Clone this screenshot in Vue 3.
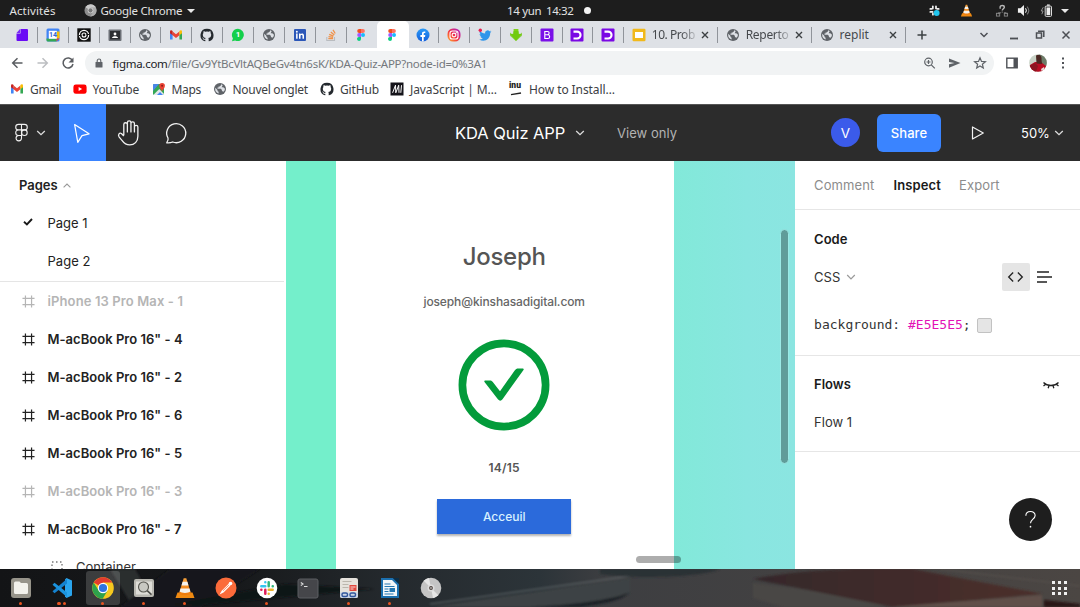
<script setup>
const pinned = [
  'doc', 'calendar', 'ring', 'classroom', 'globe', 'gmail', 'github', 'whatsapp', 'globe', 'linkedin',
  'stack', 'figma', 'figma', 'facebook', 'instagram', 'twitter', 'download', 'bootstrap', 'dee', 'dee'
]
const pinText = { calendar: '14', whatsapp: '1' }
const activeTab = 12
const tabs = [
  { icon: 'slides', text: '10. Prob', cls: 'w-prob' },
  { icon: 'globe', text: 'Reperto', cls: 'w-rep' },
  { icon: 'globe', text: 'replit', cls: 'w-replit' }
]
const bookmarks = [
  { icon: 'gmail', text: 'Gmail', cls: 'b1' },
  { icon: 'youtube', text: 'YouTube', cls: 'b2' },
  { icon: 'maps', text: 'Maps', cls: 'b3' },
  { icon: 'globe', text: 'Nouvel onglet', cls: 'b4' },
  { icon: 'github', text: 'GitHub', cls: 'b5' },
  { icon: 'mdn', text: 'JavaScript | M…', cls: 'b6' },
  { icon: 'inu', text: 'How to Install…', cls: 'b7' }
]
const layers = [
  { text: 'iPhone 13 Pro Max - 1', dim: true, wide: true },
  { text: 'M-acBook Pro 16" - 4' },
  { text: 'M-acBook Pro 16" - 2' },
  { text: 'M-acBook Pro 16" - 6' },
  { text: 'M-acBook Pro 16" - 5' },
  { text: 'M-acBook Pro 16" - 3', dim: true },
  { text: 'M-acBook Pro 16" - 7' }
]
const dock = [
  { icon: 'd-files', dots: 1 }, { icon: 'd-code', dots: 2 }, { icon: 'd-chrome', dots: 1, on: true },
  { icon: 'd-search', dots: 1 }, { icon: 'd-vlc', dots: 1 }, { icon: 'd-postman', dots: 0 },
  { icon: 'd-slack', dots: 1 }, { icon: 'd-term', dots: 0 }, { icon: 'd-doc', dots: 1 },
  { icon: 'd-writer', dots: 1 }, { icon: 'd-disc', dots: 0 }
]
</script>

<template>
  <div class="screen">
    <svg class="defs" width="0" height="0">
      <defs>
        <linearGradient id="ig" x1="0" y1="1" x2="1" y2="0">
          <stop offset="0" stop-color="#ffb82e" /><stop offset=".45" stop-color="#f5333f" /><stop offset="1" stop-color="#a51bd6" />
        </linearGradient>
        <linearGradient id="fb" x1="0" y1="0" x2="0" y2="1">
          <stop offset="0" stop-color="#2a9af7" /><stop offset="1" stop-color="#1560dc" />
        </linearGradient>
        <linearGradient id="cone" x1="0" y1="0" x2="0" y2="1">
          <stop offset="0" stop-color="#f9a23a" /><stop offset="1" stop-color="#ee7a0c" />
        </linearGradient>
      </defs>
      <symbol id="doc" viewBox="0 0 14 14"><path d="M5.500 1H12a1 1 0 0 1 1 1v10a1 1 0 0 1-1 1H2.500a1 1 0 0 1-1-1V5.500H5.500z" fill="#6a0cf5" /><path d="M5 1v4H1.500z" fill="#7a2cf7" /></symbol>
      <symbol id="calendar" viewBox="0 0 14 14"><rect x=".5" y=".5" width="13" height="13" rx="1.500" fill="#4285f4" /><path d="M10.500 3.500h3v7h-3z" fill="#fbbc04" /><path d="M3 10.500h7.500v3H2a1.500 1.500 0 0 1-1.500-1.500v-1.500z" fill="#34a853" /><path d="M10.500 10.500h3l-3 3z" fill="#ea4335" /><rect x="2.800" y="2.800" width="8" height="8" fill="#fff" /></symbol>
      <symbol id="ring" viewBox="0 0 14 14"><rect x=".3" y=".3" width="13.400" height="13.400" fill="#111" /><circle cx="7" cy="7" r="4.600" fill="none" stroke="#fff" stroke-width="1.200" /><circle cx="7" cy="7" r="2" fill="none" stroke="#fff" stroke-width="1.100" /><path d="M2 7.500h2.500M9.500 6.500H12" stroke="#111" /></symbol>
      <symbol id="classroom" viewBox="0 0 14 14"><rect x=".5" y="1.500" width="13" height="11.500" rx="1" fill="#6b6f75" /><rect x="2" y="3" width="10" height="8.500" fill="#2d2f33" /><circle cx="7" cy="6" r="1.400" fill="#fff" /><path d="M4 10c0-2.400 6-2.400 6 0z" fill="#fff" /></symbol>
      <symbol id="globe" viewBox="0 0 14 14"><circle cx="7" cy="7" r="6" fill="#5f6368" /><path d="M2.300 5.800l2.200 2.100v1l1.100.9v1.700C3.400 11 2 9.200 2.200 6.800zM8 2.200v1.100L6.700 4.400H5.600v1.200H4.500v1.100h3.400l1 1.200v1l1.600.9c.9-.8 1.400-1.800 1.500-3L10.300 5.300H8.700l1-2.300z" fill="#dee1e6" /></symbol>
      <symbol id="gmail" viewBox="0 0 14 14"><path d="M1 3.500v8h2.600V6z" fill="#4285f4" /><path d="M13 3.500v8h-2.600V6z" fill="#34a853" /><path d="M3.600 3.500L7 6.200l3.400-2.700v3.700L7 9.900 3.600 7.200z" fill="#ea4335" /><path d="M1 3.900c0-1.700 1.500-1.900 2.600-1v4.300L1 5.300z" fill="#c5221f" /><path d="M13 3.900c0-1.700-1.500-1.900-2.600-1v4.300L13 5.300z" fill="#fbbc04" /></symbol>
      <symbol id="github" viewBox="0 0 16 16"><path fill="#24292e" d="M8 .8a7.400 7.400 0 0 0-2.400 14.400c.4.100.5-.2.500-.4v-1.400c-2 .4-2.500-.9-2.500-.9-.3-.9-.8-1.100-.8-1.100-.7-.5 0-.5 0-.5.700.1 1.100.8 1.100.8.700 1.100 1.800.8 2.200.6.100-.5.300-.8.500-1-1.700-.2-3.400-.8-3.400-3.700 0-.8.300-1.500.8-2-.1-.2-.4-1 .1-2 0 0 .6-.2 2 .8a7 7 0 0 1 3.800 0c1.400-1 2-.8 2-.8.500 1 .2 1.800.1 2 .5.500.8 1.200.8 2 0 2.900-1.700 3.500-3.400 3.700.300.300.5.700.5 1.400v2.100c0 .2.100.5.500.4A7.400 7.400 0 0 0 8 .8z" /></symbol>
      <symbol id="whatsapp" viewBox="0 0 14 14"><path d="M7 .8a6.100 6.100 0 1 1-2.900 11.600L1 13.200l.9-3A6.100 6.100 0 0 1 7 .8z" fill="#13cf4b" /></symbol>
      <symbol id="linkedin" viewBox="0 0 14 14"><rect x="1" y="1" width="12" height="12" rx="1" fill="#2b57b8" /><path d="M3.100 5.500h1.500v5.200H3.100zM6 5.500h1.500v.7c.8-1.200 3.500-1.200 3.500 1.300v3.200H9.500V8c0-1.500-2-1.400-2 0v2.700H6z" fill="#fff" /><circle cx="3.850" cy="3.800" r=".95" fill="#fff" /></symbol>
      <symbol id="stack" viewBox="0 0 14 14"><path d="M2.800 9v3.500h7.700V9" fill="none" stroke="#b9bcc0" stroke-width="1.100" /><path d="M4.300 10.700h4.800M4.500 8.600l4.600.7M5.200 6.300l4.200 1.800M6.800 4l3.500 2.900M9 1.800l2.200 3.700" stroke="#f0924a" stroke-width="1.300" /></symbol>
      <symbol id="figma" viewBox="0 0 14 14"><path d="M7 1H5.200a2 2 0 0 0 0 4H7z" fill="#f24e1e" /><path d="M7 1h1.900a2 2 0 0 1 0 4H7z" fill="#ff7262" /><path d="M7 5H5.200a2 2 0 0 0 0 4H7z" fill="#a259ff" /><circle cx="9" cy="7" r="2" fill="#1abcfe" /><path d="M7 9H5.200A2 2 0 1 0 7 11z" fill="#0acf83" /></symbol>
      <symbol id="facebook" viewBox="0 0 14 14"><circle cx="7" cy="7" r="6.500" fill="url(#fb)" /><path d="M6 13.400V8.900H4.400V7.100H6V5.700c0-1.800 1-2.600 3.300-2.200v1.500c-1.200-.1-1.600.1-1.600.9v1.200h1.600l-.3 1.800H7.700v4.500z" fill="#fff" /></symbol>
      <symbol id="instagram" viewBox="0 0 14 14"><rect x=".5" y=".5" width="13" height="13" rx="5.500" fill="url(#ig)" /><rect x="3" y="3" width="8" height="8" rx="2.300" fill="none" stroke="#fff" stroke-width="1.100" /><circle cx="7" cy="7" r="1.900" fill="none" stroke="#fff" stroke-width="1.100" /><circle cx="9.300" cy="4.700" r=".6" fill="#fff" /></symbol>
      <symbol id="twitter" viewBox="0 0 14 14"><path d="M13.400 3.500c-.5.200-.9.300-1.400.4.500-.3.900-.8 1.100-1.300-.5.300-1 .5-1.600.6a2.500 2.500 0 0 0-4.300 2.300C5 5.400 3.200 4.400 2 2.900c-.8 1.400-.3 2.600.7 3.400-.4 0-.8-.1-1.100-.3 0 1.300.9 2.200 2 2.500-.4.100-.7.100-1.100 0 .3 1 1.200 1.700 2.300 1.700A5 5 0 0 1 1.100 11.400c4.900 3 11.200.4 11.100-6.600.5-.4.900-.8 1.200-1.300z" fill="#2f95ea" /><circle cx="2.300" cy="2.300" r="1.700" fill="#e81f4f" /></symbol>
      <symbol id="download" viewBox="0 0 14 14"><path d="M4.600 1h4.800v5h3.500L7 12.900 1.100 6h3.500z" fill="#7fd11b" /><path d="M1 4.500l2.500 2L4.600 3h4.800l1.100 3.500L13 4.500v3.300L7 13 1 7.800z" fill="#6cc80d" opacity=".7" /></symbol>
      <symbol id="bootstrap" viewBox="0 0 14 14"><rect x=".5" y=".5" width="13" height="13" rx="1" fill="#7a10e8" /><path d="M4.800 3.500h2.700c2.200 0 2.200 3.100.1 3.300H4.800zM4.800 6.800h3c2.500.1 2.500 3.700 0 3.700h-3z" fill="none" stroke="#fff" stroke-width="1.100" /></symbol>
      <symbol id="dee" viewBox="0 0 14 14"><rect x=".5" y=".5" width="13" height="13" rx="1" fill="#7a08e4" /><path d="M3.500 3.600h3.600a3.400 3.400 0 0 1 0 6.900H3.500" fill="none" stroke="#fff" stroke-width="2.100" /></symbol>
      <symbol id="slides" viewBox="0 0 14 14"><rect x=".5" y=".8" width="13" height="12.400" rx="1.200" fill="#f1b91b" /><rect x="3" y="4" width="8" height="6" fill="#fff" /></symbol>
      <symbol id="youtube" viewBox="0 0 14 14"><rect x=".4" y="2.500" width="13.200" height="9.300" rx="2.400" fill="#f00" /><path d="M5.600 5.100v4l3.500-2z" fill="#fff" /></symbol>
      <symbol id="maps" viewBox="0 0 14 14"><rect x="1" y="2" width="11" height="11" rx="1.200" fill="#34a853" /><path d="M1.500 12.700L7.300 7l5 5.300-.8.700H2z" fill="#e3e6e8" /><path d="M5 13l3-3 3 3z" fill="#4285f4" /><path d="M1 7V3.200A1.200 1.200 0 0 1 2.200 2H7L1 9z" fill="#4a86e8" /><path d="M10 9.300C8.800 7 7.300 5.700 7.300 3.700a2.800 2.800 0 0 1 5.600 0c0 2-1.700 3.300-2.900 5.600z" fill="#ea4335" /><circle cx="10.100" cy="3.700" r="1" fill="#8e1b14" /></symbol>
      <symbol id="mdn" viewBox="0 0 14 14"><rect x=".5" y=".5" width="13" height="13" fill="#15141a" /><path d="M2.600 10.800L5.500 3.200 5.800 10.800 8.700 3.200 9 10.800M11.500 3.200L10.800 10.800" fill="none" stroke="#fff" stroke-width="1" /></symbol>
      <symbol id="inu" viewBox="0 0 14 14"><path d="M2 12.600l10-1.600" stroke="#222" stroke-width="1.300" /></symbol>

      <symbol id="chrome-grey" viewBox="0 0 14 14"><circle cx="7" cy="7" r="6.500" fill="#8e8e8e" /><path d="M7 7L1.500 3.500A6.500 6.500 0 0 1 12.900 4H7z" fill="#c9c9c9" /><path d="M9.700 8.500L6.800 13.500a6.500 6.500 0 0 0 6-9.400H7z" fill="#ababab" /><circle cx="7" cy="7" r="3" fill="#ddd" /><circle cx="7" cy="7" r="2.300" fill="#777" /></symbol>
      <symbol id="slack-tray" viewBox="0 0 14 14"><path d="M5.200 2.500v2.300M8.600 2.500v2.300M2.500 5.300h1.500M10 5.300h1.500M2.500 8.500h2.500M5.300 10.500v1" stroke="#eee" stroke-width="1.900" stroke-linecap="round" /><circle cx="9.300" cy="9.700" r="3.200" fill="#21c5ee" /></symbol>
      <symbol id="d-vlc" viewBox="0 0 22 22"><path d="M3.500 15.500h15l2 5.500h-19z" fill="#f08a12" /><path d="M9.700 1.300h2.600L17 16.500c-2 2.300-10 2.300-12 0z" fill="url(#cone)" /><path d="M8.600 4.800h4.800l1.100 3.700H7.500zM6.500 11.600h9l.9 3c-2 1.800-8.800 1.800-10.800 0z" fill="#f4f2ef" /></symbol>
      <symbol id="network" viewBox="0 0 14 14"><path d="M5 5V3.300C5 1 9.500 1 9.500 3.400 9.500 5 7.300 5.200 7.300 7" fill="none" stroke="#b8b8b8" stroke-width="1.500" /><path d="M7.200 8v1.500M3 11V9.500h3M9 9.500h2.500V11" stroke="#888" fill="none" /><rect x="1" y="10" width="3.500" height="3" fill="none" stroke="#888" /><rect x="9.500" y="10" width="3.500" height="3" fill="none" stroke="#888" /></symbol>
      <symbol id="sound" viewBox="0 0 14 14"><path d="M1 4.700h2.800L7.500 1.200v11.600L3.800 9.300H1z" fill="#f2f2f2" /><path d="M9 4.600c1.300 1.400 1.300 3.400 0 4.800" fill="none" stroke="#ddd" stroke-width="1.100" /><path d="M10.800 2.800c2.400 2.600 2.400 5.800 0 8.400" fill="none" stroke="#777" stroke-width="1.100" /></symbol>
      <symbol id="battery" viewBox="0 0 14 14"><path d="M3.500 3.500L1.300 7.500h2L2 11" fill="none" stroke="#999" /><rect x="5.600" y="2.300" width="6.800" height="11" rx="1" fill="none" stroke="#eee" /><rect x="7" y="3.700" width="4" height="8.200" fill="#eee" /><path d="M7.500 1.200h3" stroke="#eee" stroke-width="1.400" /></symbol>

      <symbol id="hash" viewBox="0 0 14 14"><path d="M3.700 .5v13M10.300 .5v13M.5 3.700h13M.5 10.300h13" stroke="currentColor" stroke-width="1.300" /></symbol>

      <symbol id="d-files" viewBox="0 0 22 22"><rect x="1" y="1" width="20" height="20" rx="3" fill="#97948a" /><path d="M4 6a1.500 1.500 0 0 1 1.500-1.500h4L11 6h5.500A1.500 1.500 0 0 1 18 7.500v8a1.500 1.500 0 0 1-1.500 1.500h-11A1.500 1.500 0 0 1 4 15.500z" fill="#f3f2ec" /></symbol>
      <symbol id="d-code" viewBox="0 0 22 22"><path d="M15.500 1L21 3.500v15L15.500 21 14 19.500v-17z" fill="#2aa5ee" /><path d="M15.800 2L1.500 14.200l2 2L16 6.500z" fill="#1482cf" /><path d="M15.800 20L1.500 7.800l2-2L16 15.500z" fill="#1b93de" /></symbol>
      <symbol id="d-chrome" viewBox="0 0 22 22"><circle cx="11" cy="11" r="10.800" fill="#f6c81e" /><path d="M11 11L1.650 5.600A10.800 10.800 0 0 1 20.350 5.600H11z" fill="#e33b2e" /><path d="M15.500 13.700L10.700 21.800A10.800 10.800 0 0 1 1.650 5.600l5 8z" fill="#2ea24c" /><circle cx="11" cy="11" r="5.200" fill="#fff" /><circle cx="11" cy="11" r="4.100" fill="#2f73e0" /></symbol>
      <symbol id="d-search" viewBox="0 0 22 22"><rect x="1" y="2" width="20" height="18" rx="2" fill="#b8b7b0" /><rect x="3" y="4.500" width="16" height="13" fill="#deddd7" /><circle cx="10.500" cy="10" r="5" fill="#c8c8c2" stroke="#55554f" stroke-width="1.100" /><path d="M14.200 13.700l4.300 4" stroke="#4b4b47" stroke-width="1.600" /></symbol>
      <symbol id="d-postman" viewBox="0 0 22 22"><circle cx="11" cy="11" r="10.500" fill="#fb6b3a" /><path d="M4.500 17.500l2.200-3.700 7-7 1.800 1.800-7 7z" fill="#fff" /><circle cx="15.500" cy="6.500" r="1.800" fill="#fff" /><path d="M8 13.700l5.800-5.500" stroke="#fb6b3a" stroke-width=".8" /></symbol>
      <symbol id="d-slack" viewBox="0 0 22 22"><circle cx="11" cy="11" r="10.300" fill="#fff" /><g stroke-width="2.500" stroke-linecap="round"><path d="M9.300 5.200v.1M5.300 9.300h4" stroke="#36c5f0" /><path d="M12.700 5.200v4.100M16.700 9.300h.1" stroke="#2eb67d" /><path d="M5.300 12.700h.1M9.300 12.700v4.100" stroke="#e01e5a" /><path d="M12.700 16.700v.1M12.700 12.700h4" stroke="#ecb22e" /></g></symbol>
      <symbol id="d-term" viewBox="0 0 22 22"><rect x="1" y="2" width="20" height="19" rx="2" fill="#45464a" stroke="#5d5e62" /><path d="M3.800 5.500L6 7 3.800 8.500M7 9.500h3.500" fill="none" stroke="#ddd" stroke-width="1.100" /></symbol>
      <symbol id="d-doc" viewBox="0 0 22 22"><rect x="2" y="1" width="18" height="20" rx="2" fill="#e5e2dc" /><path d="M4.500 4.500h9M4.500 7.500h6M4.500 10.500h6" stroke="#bbb6ad" stroke-width="1.200" /><rect x="11.500" y="8" width="7" height="6" fill="#e0473c" /><path d="M12.500 10h5M12.500 12h3" stroke="#fff" stroke-width=".8" /><path d="M2 15.500h18V19a2 2 0 0 1-2 2H4a2 2 0 0 1-2-2z" fill="#cbd5e4" /><rect x="4" y="16" width="5.500" height="3.500" rx="1.500" fill="none" stroke="#31559b" stroke-width="1.400" /><rect x="12" y="16" width="5.500" height="3.500" rx="1.500" fill="none" stroke="#31559b" stroke-width="1.400" /></symbol>
      <symbol id="d-writer" viewBox="0 0 22 22"><path d="M2 1h12l6 6v14H2z" fill="#1b6fae" /><path d="M14 1h6v6z" fill="#0b2d46" /><path d="M4 3h9l5 5v11H4z" fill="#f2f6f9" /><path d="M5.500 7h6M5.500 9.500h10M5.500 12h4M5.500 14.500h4M5.500 17h9" stroke="#2477b2" stroke-width="1.200" /><rect x="10.500" y="11" width="5.500" height="4" fill="#2477b2" /></symbol>
      <symbol id="d-disc" viewBox="0 0 22 22"><circle cx="11" cy="11" r="10.300" fill="#c4c4c4" /><path d="M11 11L3.700 3.700A10.300 10.300 0 0 1 9 .9zM11 11l7.300 7.300A10.300 10.300 0 0 1 13 21.100z" fill="#e6e6e6" /><circle cx="11" cy="11" r="3.500" fill="#ddd" /><circle cx="11" cy="11" r="1.900" fill="#4a3f3a" /><circle cx="11" cy="11" r=".8" fill="#eee" /></symbol>
    </svg>

    <header class="system">
      <span class="act">Activités</span>
      <svg class="i13 sys-chrome"><use href="#chrome-grey" /></svg>
      <span class="app">Google Chrome</span>
      <i class="tri"></i>
      <span class="date">14 yun</span><span class="time">14:32</span><i class="bullet"></i>
      <div class="tray">
        <svg class="i13"><use href="#slack-tray" /></svg>
        <svg class="i13 t-vlc"><use href="#d-vlc" /></svg>
        <svg class="i13 t-net"><use href="#network" /></svg>
        <svg class="i13 t-snd"><use href="#sound" /></svg>
        <svg class="i13 t-bat"><use href="#battery" /></svg>
        <i class="tri"></i>
      </div>
    </header>

    <nav class="tabstrip">
      <div v-for="(p, i) in pinned" :key="i" class="pin" :class="{ on: i === activeTab, nosep: i === activeTab || i === activeTab - 1 }">
        <svg class="i14"><use :href="'#' + p" /></svg>
        <span v-if="pinText[p]" class="gl" :class="p">{{ pinText[p] }}</span>
      </div>
      <div v-for="t in tabs" :key="t.text" class="tab">
        <svg class="i14"><use :href="'#' + t.icon" /></svg>
        <span class="tt" :class="t.cls">{{ t.text }}</span>
        <svg class="x" viewBox="0 0 8 8"><path d="M1 1l6 6M7 1L1 7" stroke="#3c4043" stroke-width="1.400" /></svg>
      </div>
      <svg class="plus" viewBox="0 0 10 10"><path d="M5 .5v9M.5 5h9" stroke="#3c4043" stroke-width="1.500" /></svg>
      <svg class="winctl" viewBox="0 0 96 14"><g fill="none" stroke="#4c4f54" stroke-width="1.500"><path d="M4.500 5l3.500 3.500L11.500 5" /><path d="M34 10.500h8" stroke-width="1.800" /><rect x="60.500" y="5" width="5" height="5" /><path d="M62.800 4V3.200h5v5h-1" /><path d="M86.500 3.500l7 7M93.500 3.500l-7 7" /></g></svg>
    </nav>

    <div class="toolbar">
      <svg class="navs" viewBox="0 0 86 28"><g fill="none" stroke="#5a5d61" stroke-width="1.500"><path d="M22.500 15H13M17.500 10.200L12.700 15l4.800 4.800" /><path d="M37.500 15H47M42.500 10.200l4.800 4.800-4.800 4.800" stroke="#bcbec1" /><path d="M72.500 12.500a5 5 0 1 0 .5 3.500" /></g><path d="M73.500 9.500v5h-5z" fill="#5a5d61" /></svg>
      <div class="omni">
        <svg class="lock" viewBox="0 0 8 10"><rect x=".5" y="4" width="7" height="5.500" rx=".6" fill="#5f6368" /><path d="M2.200 4V2.800a1.800 1.800 0 0 1 3.600 0V4" fill="none" stroke="#5f6368" stroke-width="1.100" /></svg>
        <span class="url"><b>figma.com</b>/file/Gv9YtBcVltAQBeGv4tn6sK/KDA-Quiz-APP?node-id=0%3A1</span>
        <svg class="omni-ic" viewBox="0 0 66 14"><g fill="none" stroke="#5f6368" stroke-width="1.200"><circle cx="5.500" cy="6" r="3.800" /><path d="M8.300 8.800l3.500 3.500M5.500 4v4M3.500 6h4" /><path d="M57 1.800l1.500 3.600 3.900.3-3 2.500.9 3.800-3.300-2-3.300 2 .9-3.800-3-2.500 3.900-.3z" /></g><path d="M26 2.500L37.500 7 26 11.700V8.200L31.500 7 26 6z" fill="#5f6368" /></svg>
      </div>
      <svg class="side" viewBox="0 0 12 12"><rect x=".8" y="1.200" width="10.400" height="9.600" fill="none" stroke="#4f5257" stroke-width="1.400" /><path d="M7.500 1h3.700v10H7.500z" fill="#4f5257" /></svg>
      <svg class="me" viewBox="0 0 18 18"><clipPath id="mc"><circle cx="9" cy="9" r="8.800" /></clipPath><g clip-path="url(#mc)"><rect width="18" height="18" fill="#c8d2c6" /><path d="M10 0h8v12h-8z" fill="#6d7b68" /><path d="M1 18V11l5-3h6l5 4v6z" fill="#b80d23" /><path d="M7 1.500c3-2 6 0 5.500 3.500L13 10 7.500 9.500z" fill="#4a2722" /><path d="M0 12l6-3 3 3-2 6H2z" fill="#8c1520" /><path d="M12 15l3-2 1 3-3 2z" fill="#e9d8d6" /></g></svg>
      <svg class="kebab" viewBox="0 0 4 14"><g fill="#4f5257"><rect x="1" y="1.500" width="2" height="2" /><rect x="1" y="6" width="2" height="2" /><rect x="1" y="10.500" width="2" height="2" /></g></svg>
    </div>

    <div class="bookmarks">
      <div v-for="b in bookmarks" :key="b.text" class="bm" :class="b.cls">
        <svg class="i14"><use :href="'#' + b.icon" /></svg>
        <span v-if="b.icon === 'inu'" class="gl inu">inu</span>
        <span class="bt">{{ b.text }}</span>
      </div>
    </div>

    <section class="figbar">
      <div class="fmenu">
        <svg class="flogo" viewBox="0 0 16 22"><g fill="none" stroke="#f2f2f2" stroke-width="1.200"><path d="M8 1.500H4.700a3 3 0 0 0 0 6.100H8zM8 1.500h3.300a3 3 0 0 1 0 6.100H8zM8 7.600H4.700a3 3 0 0 0 0 6.100H8z" /><circle cx="11.200" cy="10.650" r="3.050" /><path d="M8 13.700H4.700A3 3 0 1 0 8 16.800z" /></g></svg>
        <svg class="chev" viewBox="0 0 10 6"><path d="M1.200 1L5 4.600 8.800 1" fill="none" stroke="#ddd" stroke-width="1.300" /></svg>
      </div>
      <div class="ftool sel"><svg class="i24" viewBox="0 0 24 24"><path d="M5.200 4.200l13.300 8.600-6.500 1.600-3.900 6.200z" fill="none" stroke="#fff" stroke-width="1.100" stroke-linejoin="round" /></svg></div>
      <div class="ftool"><svg class="i24" viewBox="0 0 24 24"><path d="M7.200 14V4.200c0-2.200 3.300-2.200 3.300 0V11V2.500c0-2.200 3.300-2.200 3.300 0V11V3.200c0-2 3.200-2 3.200 0V11V6.500c0-2 3.200-2 3.200 0V15c0 5-3.200 8-7.500 8-3.500 0-5.200-1.400-7-4L2.800 15.500C1.500 13.200 3.300 11.500 5 12.500l2.200 2.300" fill="none" stroke="#f2f2f2" stroke-width="1.200" stroke-linejoin="round" /></svg></div>
      <div class="ftool"><svg class="i24" viewBox="0 0 24 24"><path d="M2.500 21c1-1.500 1.700-3 1.200-4.400A8.800 8.800 0 1 1 8 20.300C6.300 21 4.500 21.200 2.500 21z" fill="none" stroke="#f2f2f2" stroke-width="1.200" stroke-linejoin="round" /></svg></div>
      <span class="ftitle">KDA Quiz APP</span>
      <svg class="chev" viewBox="0 0 10 6"><path d="M1.200 1L5 4.600 8.800 1" fill="none" stroke="#ddd" stroke-width="1.300" /></svg>
      <span class="viewonly">View only</span>
      <span class="avatar">V</span>
      <button class="share">Share</button>
      <svg class="play" viewBox="0 0 14 16"><path d="M1.500 2v12l10.800-6z" fill="none" stroke="#f2f2f2" stroke-width="1.200" stroke-linejoin="round" /></svg>
      <span class="zoom">50%</span>
      <svg class="chev" viewBox="0 0 10 6"><path d="M1.200 1L5 4.600 8.800 1" fill="none" stroke="#ddd" stroke-width="1.300" /></svg>
    </section>

    <main class="body">
      <aside class="left">
        <div class="pages">
          <div class="row head">Pages<svg class="up" viewBox="0 0 8 5"><path d="M.6 4.300L4 1l3.400 3.300" fill="none" stroke="#999" stroke-width="1.100" /></svg></div>
          <div class="row"><svg class="tick" viewBox="0 0 10 8"><path d="M1 3.800L3.900 6.400 9 1" fill="none" stroke="#1a1a1a" stroke-width="1.900" /></svg>Page 1</div>
          <div class="row page2">Page 2</div>
        </div>
        <div v-for="l in layers" :key="l.text" class="row layer" :class="{ dim: l.dim, wide: l.wide }">
          <svg class="hash"><use href="#hash" /></svg>{{ l.text }}
        </div>
        <div class="row child"><svg class="grp" viewBox="0 0 12 12"><rect x="1" y="1" width="10" height="10" fill="none" stroke="#777" stroke-width="1.400" stroke-dasharray="1.500 2.500" /></svg>Container</div>
      </aside>

      <section class="canvas">
        <div class="green"></div>
        <div class="card">
          <h1>Joseph</h1>
          <p class="mail">joseph@kinshasadigital.com</p>
          <svg class="ok" viewBox="0 0 92 92"><circle cx="46" cy="46" r="41.600" fill="none" stroke="#039b3b" stroke-width="7.700" /><path d="M26.700 43.200c-.9-1.200-.6-1.800.9-1.800h4.100c1.500 0 2 .3 2.900 1.400l7.400 9.400 14.500-20.500c1.200-1.600 2.200-2.200 4-2.200h3.900c1.400 0 1.700.6.900 1.700L44.500 60.300c-1.400 1.900-3.100 1.900-4.600 0z" fill="#039b3b" /></svg>
          <p class="score">14/15</p>
          <button class="go">Acceuil</button>
        </div>
        <div class="teal"></div>
        <i class="vbar"></i><i class="hbar"></i>
      </section>

      <aside class="right">
        <div class="rtabs"><span class="c1">Comment</span><b>Inspect</b><span class="c3">Export</span></div>
        <div class="code">
          <div class="row h">Code</div>
          <div class="row">CSS<svg class="down" viewBox="0 0 10 6"><path d="M1.200 1L5 4.800 8.800 1" fill="none" stroke="#999" stroke-width="1.200" /></svg>
            <span class="brk"><svg viewBox="0 0 18 12"><path d="M6.500 1.200L1.800 6l4.700 4.800M11.500 1.200L16.200 6l-4.700 4.800" fill="none" stroke="#222" stroke-width="1.400" /></svg></span>
            <svg class="lines" viewBox="0 0 15 12"><path d="M0 1h12M0 6h15M0 11h10" stroke="#222" stroke-width="1.400" /></svg>
          </div>
          <div class="prop"><span>background: </span><em>#E5E5E5</em><span>;</span><i></i></div>
        </div>
        <div class="flows">
          <div class="row h">Flows<svg class="lash" viewBox="0 0 18 10"><path d="M1.500 2.500c4 4 11 4 15 0M3.600 4.300L1.500 6M7 5.400L6.200 8.200M11 5.400l.8 2.800M14.400 4.300l2.100 1.700" fill="none" stroke="#222" stroke-width="1.300" /></svg></div>
          <div class="row">Flow 1</div>
        </div>
      </aside>
      <div class="help"><svg viewBox="0 0 14 20"><path d="M2 6C2 0 12 0 12 5.600c0 3.900-5 4-5 8.400" fill="none" stroke="#fff" stroke-width="1.200" /><circle cx="7" cy="17.700" r=".9" fill="#fff" /></svg></div>
    </main>

    <footer class="dock">
      <svg class="wall" viewBox="0 0 1080 38" preserveAspectRatio="none">
        <defs>
          <linearGradient id="dk" x1="0" x2="1"><stop offset="0" stop-color="#131416" /><stop offset=".22" stop-color="#17191b" /><stop offset=".36" stop-color="#24292d" /><stop offset=".5" stop-color="#2c3439" /><stop offset=".56" stop-color="#3d3e41" /><stop offset="1" stop-color="#4b4643" /></linearGradient>
          <linearGradient id="bk" x1="0" x2="1"><stop offset="0" stop-color="#35282a" /><stop offset="1" stop-color="#4c2f29" /></linearGradient>
          <filter id="soft"><feGaussianBlur stdDeviation="1" /></filter>
        </defs>
        <rect width="1080" height="38" fill="url(#dk)" />
        <g filter="url(#soft)">
          <path d="M110 0h25l22 38h-24z" fill="#2b2d2f" />
          <path d="M170 0h90l-60 38h-80z" fill="#15171a" />
          <path d="M200 36L375 20l-90-5-110 20z" fill="#111417" />
          <path d="M430 38L630 9v15c-30 8-50 10-70 14z" fill="#3d4245" />
          <path d="M430 35L630 7" stroke="#636a6c" stroke-width="1" />
          <path d="M530 38c40-2 85-7 100-15-10 10-30 12-50 15z" fill="#1c2127" />
          <path d="M600 0h120c-20 9-90 10-120 5z" fill="#2b3035" />
          <path d="M753 14v15l30 9h100v-8z" fill="#4a4645" />
          <path d="M753 10c25-5 60-9 100-10h60l130 25-150 13z" fill="url(#bk)" />
          <path d="M890 38l152-12v12z" fill="#605049" />
          <path d="M1044 31l36 4v3h-36z" fill="#2a1517" />
          <path d="M940 0l140 17" stroke="#58524e" stroke-width="1" />
        </g>
      </svg>
      <div v-for="d in dock" :key="d.icon" class="di" :class="{ on: d.on }">
        <svg class="dic"><use :href="'#' + d.icon" /></svg>
        <span class="dots"><i v-for="n in d.dots" :key="n"></i></span>
      </div>
      <div class="grid9"><i v-for="n in 9" :key="n"></i></div>
    </footer>
  </div>
</template>

<style>
html, body { margin: 0; overflow: hidden; }
</style>

<style scoped>
* { box-sizing: border-box; }
svg { display: block; flex: none; }
.screen { width: 1080px; height: 607px; display: flex; flex-direction: column; overflow: hidden; background: #fff; font-family: Inter, sans-serif; position: relative; }
.defs { position: absolute; }
.i13 { width: 13px; height: 13px; }
.i14 { width: 14px; height: 14px; }
.i24 { width: 26px; height: 26px; }
.gl { position: absolute; font-family: Roboto, sans-serif; font-weight: 700; letter-spacing: 0; }
.calendar { font-size: 7px; line-height: 8px; color: #3367d6; left: 11.500px; top: 9.500px; }
.whatsapp { font-size: 8px; line-height: 9px; color: #fff; left: 13.200px; top: 9px; }
.inu { font-size: 8.500px; line-height: 10px; font-weight: 900; color: #222; left: 0; top: -1px; }

.system { height: 21px; flex: none; background: #1d1d1d; color: #e3e3e3; font: 11.500px "Noto Sans", sans-serif; display: flex; align-items: center; white-space: nowrap; }
.act { margin-left: 9.500px; width: 74px; letter-spacing: .12px; }
.sys-chrome { margin-right: 4px; }
.app { width: 86px; letter-spacing: -.25px; }
.tri { border: 4px solid transparent; border-top: 4px solid #e8e8e8; border-bottom: 0; flex: none; }
.date { margin-left: 312.500px; width: 39px; letter-spacing: -.3px; }
.time { width: 38px; letter-spacing: -.4px; }
.bullet { width: 7px; height: 7px; border-radius: 50%; background: #f4f4f4; }
.tray { margin-left: auto; margin-right: 11px; display: flex; align-items: center; }
.t-vlc { margin-left: 19px; }
.t-net { margin-left: 22px; width: 14px; }
.t-snd { margin-left: 8px; }
.t-bat { margin: 0 8px 0 10px; }

.tabstrip { height: 27px; flex: none; background: #dee1e6; display: flex; align-items: center; padding-left: 6.600px; }
.pin { width: 30.870px; height: 100%; flex: none; display: flex; align-items: center; justify-content: center; position: relative; }
.pin::after, .tab::after { content: ""; position: absolute; right: -.5px; top: 6px; width: 1px; height: 16px; background: #90949a; }
.pin.nosep::after { display: none; }
.pin.on { background: #fff; border-radius: 5px 5px 0 0; box-shadow: 1px 0 0 #fff; }
.tab { width: 93.900px; height: 100%; flex: none; display: flex; align-items: center; padding-left: 8px; position: relative; font: 12px "Noto Sans", sans-serif; color: #46494d; }
.tt { width: 45px; margin-left: 6px; white-space: nowrap; }
.w-prob { letter-spacing: -.45px; }
.w-rep { letter-spacing: -.3px; }
.w-prob, .w-rep { -webkit-mask-image: linear-gradient(90deg, #000 65%, transparent 105%); mask-image: linear-gradient(90deg, #000 65%, transparent 105%); }
.x { width: 8px; height: 8px; margin-left: 4px; }
.plus { width: 10px; height: 10px; margin-left: 12px; }
.winctl { width: 96px; height: 14px; margin-left: auto; margin-right: 8px; }

.toolbar { height: 28px; flex: none; display: flex; align-items: center; }
.navs { width: 86px; height: 28px; }
.omni { width: 909px; height: 24px; margin-top: 2px; border-radius: 12px; background: #f1f3f4; display: flex; align-items: center; padding: 0 5px 0 10px; margin-right: 12px; margin-left: -1px; flex: none; }
.lock { width: 8px; height: 10px; margin-right: 9.500px; }
.url { font: 11.500px "Noto Sans", sans-serif; color: #74787d; letter-spacing: -.27px; white-space: nowrap; }
.url b { font-weight: 400; color: #202124; }
.omni-ic { width: 66px; height: 14px; margin-left: auto; }
.side { width: 12px; height: 12px; margin-top: 2px; }
.me { width: 18px; height: 18px; margin: 2px 0 0 10.500px; }
.kebab { width: 4px; height: 14px; margin: 2px 0 0 14.500px; }

.bookmarks { height: 28px; flex: none; display: flex; align-items: center; padding-bottom: 2px; font: 12px "Noto Sans", sans-serif; color: #3c4043; white-space: nowrap; }
.bm { display: flex; align-items: center; gap: 6px; flex: none; position: relative; letter-spacing: -.3px; }
.b1 { margin-left: 10px; width: 62.500px; }
.b2 { width: 79px; }
.b3 { width: 61px; }
.b4 { width: 107.500px; }
.b5 { width: 70px; letter-spacing: -.15px; }
.b6 { width: 119px; letter-spacing: -.08px; }
.b7 { letter-spacing: -.08px; }

.figbar { height: 57px; flex: none; background: #2c2c2c; color: #fff; display: flex; align-items: center; box-shadow: inset 0 1px #555; white-space: nowrap; }
.fmenu { width: 58.500px; display: flex; align-items: center; padding-left: 14px; }
.flogo { width: 15px; height: 20px; margin-right: 7px; }
.chev { width: 10px; height: 6px; }
.ftool { width: 47.300px; height: 57px; display: flex; align-items: center; justify-content: center; }
.sel { background: #3a84ff; }
.sel svg { margin-top: 1px; }
.ftitle { margin-left: 254.600px; width: 120px; font-size: 16.500px; letter-spacing: -.06px; }
.viewonly { margin-left: 32px; width: 214px; font-size: 13px; color: #b3b3b3; letter-spacing: .05px; }
.avatar { width: 29px; height: 29px; border-radius: 50%; background: #3b5bea; font-size: 13.500px; display: flex; align-items: center; justify-content: center; }
.share { width: 64px; height: 38px; margin-left: 17px; border: 0; border-radius: 6px; background: #3a84ff; color: #fff; font: 500 13px Inter, sans-serif; padding: 0; letter-spacing: .1px; }
.play { width: 14px; height: 16px; margin-left: 30px; }
.zoom { margin-left: 36px; width: 33px; font-size: 13px; }

.body { height: 408px; flex: none; display: flex; position: relative; overflow: hidden; font-size: 13px; color: #222; }
.left { width: 285.600px; flex: none; }
.row { height: 38px; display: flex; align-items: center; white-space: nowrap; }
.pages { padding-top: 5px; height: 121px; border-bottom: 1px solid #e5e5e5; margin-right: 2px; }
.head { padding-left: 19px; font-weight: 600; }
.up { width: 8px; height: 5px; margin-left: 5px; }
.tick { width: 10px; height: 8px; margin: -2px 14.500px 0 23px; }
.page2 { padding-left: 47.500px; letter-spacing: .05px; }
.layer { font-weight: 600; letter-spacing: .03px; }
.wide { letter-spacing: .12px; }
.hash { width: 13px; height: 13px; margin: 0 12.500px 0 22px; }
.dim { color: #b5b5b5; }
.child { padding-left: 51px; color: #333; }
.grp { width: 12px; height: 12px; margin-right: 13px; }

.canvas { width: 509.200px; flex: none; display: flex; position: relative; }
.green { width: 50px; background: #74efcb; }
.card { width: 338.200px; background: #fff; display: flex; flex-direction: column; align-items: center; color: #555; padding-right: 1px; }
.card h1 { margin: 80px 0 0; font-size: 24px; line-height: 32px; font-weight: 500; letter-spacing: -.25px; }
.mail { margin: 21px 0 0; font-size: 12px; line-height: 16px; font-weight: 500; color: #666; letter-spacing: -.11px; }
.ok { width: 92px; height: 92px; margin-top: 29px; }
.score { margin: 29px 0 0; font-size: 12px; line-height: 16px; font-weight: 600; letter-spacing: .2px; }
.go { width: 134px; height: 35px; margin-top: 23px; border: 0; background: #2b6adb; color: #d9f1ff; font: 500 12px Inter, sans-serif; box-shadow: 0 2px 2px rgba(0, 0, 0, .3); }
.teal { flex: 1; background: linear-gradient(90deg, #82e9d9, #89e6e0 60%, #8be5e1); }
.vbar { position: absolute; left: 494.500px; top: 68px; width: 9px; height: 235px; border-radius: 5px; background: #609c99; border: 1px solid #9be9e5; }
.hbar { position: absolute; left: 350.400px; top: 395px; width: 45px; height: 7px; border-radius: 4px; background: rgba(0, 0, 0, .32); }

.right { width: 285.200px; flex: none; color: #333; }
.right > div { padding-left: 19.300px; border-bottom: 1px solid #e6e6e6; }
.rtabs { height: 49px; display: flex; align-items: center; color: #8c8c8c; letter-spacing: .12px; }
.rtabs b { font-weight: 600; color: #1a1a1a; margin: 0 18px 0 19px; }
.code { height: 146px; padding-top: 10px; }
.h { font-weight: 600; color: #1a1a1a; }
.down { width: 10px; height: 6px; margin-left: 6px; }
.brk { width: 28px; height: 28px; margin-left: auto; border-radius: 2px; background: #e5e5e5; display: flex; align-items: center; justify-content: center; }
.brk svg { width: 17px; height: 12px; }
.lines { width: 15px; height: 12px; margin: 0 28px 0 7px; }
.prop { height: 58px; padding-bottom: 2px; display: flex; align-items: center; font: 13px "DejaVu Sans Mono", monospace; white-space: pre; }
.prop em { font-style: normal; color: #e312b6; }
.prop i { width: 15px; height: 15px; margin: 2px 0 0 6px; border: 1px solid #c2c2c2; border-radius: 2px; background: #e5e5e5; }
.flows { height: 96px; padding-top: 9px; }
.lash { width: 18px; height: 10px; margin-left: auto; margin-right: 20px; margin-top: 2px; }
.help { position: absolute; left: 1008.700px; top: 336.700px; width: 43px; height: 43px; border-radius: 50%; background: #1e1e1e; display: flex; align-items: center; justify-content: center; }
.help svg { width: 13px; height: 19px; }

.dock { height: 38px; flex: none; display: flex; position: relative; overflow: hidden; background: #17191b; }
.wall { position: absolute; left: 0; top: 0; width: 1080px; height: 38px; }
.di { width: 34px; height: 34px; margin: 2px 3.500px 0; flex: none; border-radius: 3px; position: relative; display: flex; justify-content: center; padding-top: 6px; }
.di.on { background: rgba(255, 255, 255, .17); }
.dic { width: 22px; height: 22px; }
.dots { position: absolute; bottom: 0; left: 0; right: 0; display: flex; justify-content: center; gap: 2px; }
.dots i { width: 3.500px; height: 3.500px; border-radius: 50%; background: #e95420; }
.grid9 { position: relative; margin-left: auto; margin-right: 13px; align-self: center; display: grid; grid-template-columns: repeat(3, 3px); gap: 2.800px; }
.grid9 i { width: 3px; height: 3px; background: #f0f0f0; }
</style>
